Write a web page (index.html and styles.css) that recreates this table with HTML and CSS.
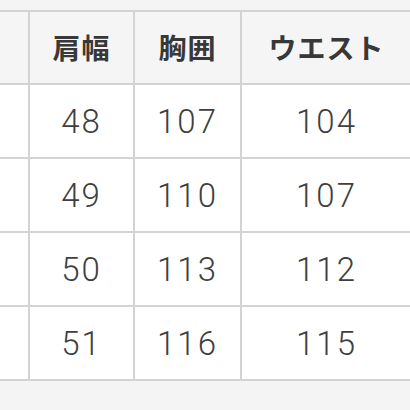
FILE: index.html
```html
<!DOCTYPE html>
<html lang="ja">
<head>
<meta charset="utf-8">
<link rel="stylesheet" href="styles.css">
</head>
<body>
<div class="sheet">
  <div class="grid">
    <div class="cell head"></div>
    <div class="cell head">肩幅</div>
    <div class="cell head">胸囲</div>
    <div class="cell head last">ウエスト</div>

    <div class="cell"></div>
    <div class="cell num">48</div>
    <div class="cell num">107</div>
    <div class="cell num last">104</div>

    <div class="cell"></div>
    <div class="cell num">49</div>
    <div class="cell num">110</div>
    <div class="cell num last">107</div>

    <div class="cell"></div>
    <div class="cell num">50</div>
    <div class="cell num">113</div>
    <div class="cell num last">112</div>

    <div class="cell"></div>
    <div class="cell num">51</div>
    <div class="cell num">116</div>
    <div class="cell num last">115</div>
  </div>
</div>
</body>
</html>
```

FILE: styles.css
```css
html, body {
  margin: 0;
  padding: 0;
  overflow: hidden;
  background: #f4f4f4;
}
.sheet {
  width: 410px;
  height: 410px;
  overflow: hidden;
  padding-top: 10px;
  box-sizing: border-box;
}
.grid {
  display: grid;
  grid-template-columns: 98px 103px 105px 175px;
  grid-template-rows: 71px 72px 72px 72px 72px;
  gap: 2px;
  padding: 2px;
  background: #d3d3d3;
  margin-left: -72px;
  width: max-content;
}
.cell {
  background: #ffffff;
  display: flex;
  align-items: center;
  justify-content: center;
  font-family: "Noto Sans CJK JP", "Noto Sans", sans-serif;
  color: #444;
}
.head {
  background: #f5f5f5;
  font-size: 28px;
  font-weight: 700;
  color: #383838;
  letter-spacing: 1px;
  padding-bottom: 2px;
}
.num {
  font-family: Roboto, "Noto Sans", sans-serif;
  font-size: 33px;
  font-weight: 300;
  letter-spacing: 2px;
  line-height: 1;
  color: #3f3f3f;
}
.last {
  padding-right: 6px;
}
```
